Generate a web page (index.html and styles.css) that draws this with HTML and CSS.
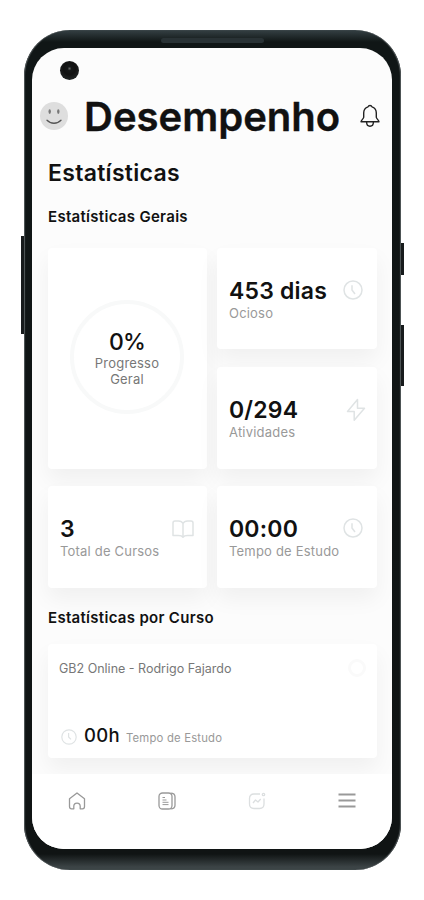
FILE: index.html
```html
<!DOCTYPE html>
<html lang="pt-BR">
<head>
    <meta charset="UTF-8">
    <meta name="viewport" content="width=device-width, initial-scale=1.0">
    <title>Desempenho</title>
    <link rel="stylesheet" href="styles.css">
</head>
<body>
    <div class="phone">
        <span class="speaker"></span>
        <span class="side-button volume"></span>
        <span class="side-button power"></span>
        <span class="side-button slider"></span>

        <div class="screen">
            <span class="camera"></span>

            <header class="topbar">
                <svg class="avatar" viewBox="0 0 28 28">
                    <circle cx="14" cy="14" r="14" fill="#dedede"/>
                    <ellipse cx="9.7" cy="9.6" rx="1.2" ry="2.3" fill="#777"/>
                    <ellipse cx="18.3" cy="9.6" rx="1.2" ry="2.3" fill="#777"/>
                    <path d="M7 18.300c3.600 3.900 10.400 3.900 14 0" fill="none" stroke="#555" stroke-width="1.3" stroke-linecap="round"/>
                </svg>
                <h1>Desempenho</h1>
                <svg class="bell" viewBox="0 0 20 24" fill="none" stroke="#222" stroke-width="1.4" stroke-linejoin="round" stroke-linecap="round">
                    <path d="M8 2.900a2.100 2.100 0 0 1 4 0c2.700.9 4.300 3.300 4.300 6.100v4.200c0 1.400 2.700 3 2.700 4.600H1c0-1.600 2.700-3.200 2.700-4.600V9c0-2.800 1.600-5.200 4.300-6.100z"/>
                    <path d="M6.600 18c0 2.500 1.300 4.200 3.400 4.200s3.400-1.700 3.400-4.200"/>
                </svg>
            </header>

            <main>
                <h2>Estatísticas</h2>

                <!-- Estatísticas gerais -->
                <h3>Estatísticas Gerais</h3>
                <section class="stats">
                    <div class="card progress">
                        <div class="ring">
                            <strong>0%</strong>
                            <span>Progresso<br>Geral</span>
                        </div>
                    </div>
                    <div class="card">
                        <div class="info">
                            <strong>453 dias</strong>
                            <span>Ocioso</span>
                        </div>
                        <svg class="icon clock" viewBox="0 0 20 20">
                            <circle cx="10" cy="10" r="9"/>
                            <path d="M9 5.200v4.800l3 4"/>
                        </svg>
                    </div>
                    <div class="card">
                        <div class="info">
                            <strong>0/294</strong>
                            <span>Atividades</span>
                        </div>
                        <svg class="icon bolt" viewBox="0 0 20 24">
                            <path d="M11.500 1.500L1.500 13.500h6.700v8.800L18.500 10.300h-7z"/>
                        </svg>
                    </div>
                    <div class="card">
                        <div class="info">
                            <strong>3</strong>
                            <span>Total de Cursos</span>
                        </div>
                        <svg class="icon book" viewBox="0 0 22 18">
                            <path d="M11 3.500C10 1.500 8.500 1 6.500 1H3Q1 1 1 3v12.500h5.500c2 0 3.500.3 4.500 1.700 1-1.400 2.500-1.700 4.500-1.700H21V3q0-2-2-2h-3.500C13.500 1 12 1.500 11 3.500zM11 3.500V17"/>
                        </svg>
                    </div>
                    <div class="card">
                        <div class="info">
                            <strong>00:00</strong>
                            <span>Tempo de Estudo</span>
                        </div>
                        <svg class="icon clock" viewBox="0 0 20 20">
                            <circle cx="10" cy="10" r="9"/>
                            <path d="M9 5.200v4.800l3 4"/>
                        </svg>
                    </div>
                </section>

                <!-- Estatísticas por curso -->
                <h3 class="by-course">Estatísticas por Curso</h3>
                <section class="course">
                    <div class="course-head">
                        <span class="course-name">GB2 Online - Rodrigo Fajardo</span>
                        <span class="course-ring"></span>
                    </div>
                    <div class="course-time">
                        <svg class="icon small-clock" viewBox="0 0 20 20">
                            <circle cx="10" cy="10" r="9"/>
                            <path d="M9.500 5v5l3 3"/>
                        </svg>
                        <strong>00h</strong>
                        <span>Tempo de Estudo</span>
                    </div>
                </section>
            </main>

            <nav>
                <svg viewBox="0 0 18 18">
                    <path d="M1.500 6.800L9 1l7.500 5.800v7.700c0 1.500-.8 2.300-2 2.300h-2.300v-2.600c0-4.200-6.400-4.200-6.400 0v2.600H3.500c-1.200 0-2-.8-2-2.300z"/>
                </svg>
                <svg viewBox="0 0 18 18">
                    <rect x="1" y="1" width="13" height="16" rx="3.500"/>
                    <path d="M12.500 1.200c3 0 4.500 1.200 4.500 3.600v8.400c0 2.400-1.500 3.600-4.500 3.600"/>
                    <path class="lines" d="M4.500 5.500h2.500M4.500 8h4M4.500 10.300h6M4.500 12.600h6"/>
                </svg>
                <svg class="active" viewBox="0 0 18 18">
                    <path d="M12 2H6C3 2 1.500 3.500 1.500 6.500v5.500c0 3 1.500 4.500 4.500 4.500h5.500c3 0 4.500-1.500 4.500-4.500V6.500M5 11l2.500-3 2.500 2 2.700-3"/>
                    <circle cx="15.500" cy="2.500" r="1.200"/>
                </svg>
                <svg class="menu" viewBox="0 0 18 18">
                    <path d="M.5 2.500h17M.5 8.500h17M.5 14.500h17"/>
                </svg>
            </nav>
        </div>
    </div>
</body>
</html>
```

FILE: styles.css
```css
* {
    box-sizing: border-box;
}

body {
    margin: 0;
    padding: 30px 0 0 24px;
    background-color: #fff;
    color: #111;
    font-family: Inter, "Liberation Sans", sans-serif;
}

h1, h2, h3 {
    margin: 0;
    font-weight: 600;
    white-space: nowrap;
}

/* Phone body */
.phone {
    position: relative;
    width: 377px;
    height: 840px;
    padding: 18px 9px 21px 8px;
    border-radius: 46px;
    background: linear-gradient(#354044 0, #101616 12px, #101414 824px, #3c4446 837px);
    box-shadow: inset 1px 0 1px #555b5d, inset -1px 0 1px #555b5d;
}

.speaker {
    position: absolute;
    top: 8px;
    left: 137px;
    width: 103px;
    height: 5px;
    border-radius: 3px;
    background-color: #293235;
}

.side-button {
    position: absolute;
    width: 3px;
    background-color: #171b1c;
}

.volume {
    left: -3px;
    top: 206px;
    height: 98px;
}

.power {
    right: -3px;
    top: 213px;
    height: 32px;
}

.slider {
    right: -3px;
    top: 295px;
    height: 61px;
}

.screen {
    position: relative;
    display: flex;
    flex-direction: column;
    width: 360px;
    height: 801px;
    border-radius: 32px;
    background-color: #fcfcfc;
    overflow: hidden;
}

.camera {
    position: absolute;
    left: 28px;
    top: 13px;
    width: 19px;
    height: 19px;
    border-radius: 50%;
    background: radial-gradient(circle at 50% 40%, #666 0, #151818 2px, #111 6px, #1d2020 10px);
}

/* Header */
.topbar {
    display: flex;
    align-items: center;
    height: 46px;
    margin-top: 45px;
    padding: 0 12px 0 8px;
}

.avatar {
    width: 28px;
    height: 28px;
}

.topbar h1 {
    flex: 1;
    padding: 1px 0 0 16px;
    font-size: 40px;
    letter-spacing: 0;
    line-height: 46px;
    -webkit-text-stroke: 0.4px #111;
}

.bell {
    width: 20px;
    height: 24px;
}

/* Content */
main {
    flex: 1;
    padding: 21px 15px 0 16px;
}

h2 {
    font-size: 23px;
    letter-spacing: 0.3px;
    line-height: 26px;
}

h3 {
    margin-top: 21px;
    font-size: 15px;
    letter-spacing: 0.3px;
    line-height: 20px;
}

.stats {
    display: grid;
    grid-template-columns: 159px 160px;
    grid-template-rows: 101px 102px 102px;
    gap: 17.5px 10px;
    margin-top: 21px;
}

.card, .course {
    border-radius: 4px;
    background-color: #fff;
    box-shadow: 0 11px 22px rgba(0, 0, 0, 0.05);
}

.card {
    display: flex;
    justify-content: space-between;
    padding: 29px 13px 0 12px;
}

.card strong {
    display: block;
    padding-top: 1px;
    font-size: 23px;
    font-weight: 600;
    letter-spacing: 0.2px;
    line-height: 26px;
    white-space: nowrap;
}

.card span {
    display: block;
    color: #999;
    font-size: 13px;
    letter-spacing: 0.2px;
    line-height: 18px;
    white-space: nowrap;
}

.card.progress {
    grid-row: span 2;
    justify-content: center;
    align-items: center;
    padding: 0 1px 2px 0;
}

.ring {
    display: flex;
    flex-direction: column;
    justify-content: center;
    width: 114px;
    height: 114px;
    border: 4px solid #f8f9f9;
    border-radius: 50%;
    text-align: center;
}

.ring strong {
    font-weight: 500;
    letter-spacing: -0.8px;
}

.card .ring span {
    color: #777;
    line-height: 16px;
}

.info {
    width: 0;
}

.icon {
    flex: none;
    fill: none;
    stroke: #dfe3e4;
    stroke-width: 1.5;
    stroke-linejoin: round;
}

.clock {
    width: 20px;
    height: 20px;
    margin: 3px 1px 0 0;
}

.bolt {
    width: 20px;
    height: 24px;
    margin: 2px -2px 0 0;
}

.book {
    width: 22px;
    height: 18px;
    margin-top: 5px;
}

/* Course card */
.by-course {
    margin-top: 20px;
}

.course {
    height: 114px;
    margin-top: 16px;
    padding: 14px 11px 0;
}

.course-head {
    display: flex;
    justify-content: space-between;
    align-items: center;
    height: 20px;
}

.course-name {
    color: #777;
    font-size: 12.5px;
}

.course-ring {
    width: 18px;
    height: 18px;
    border: 3px solid #fafafa;
    border-radius: 50%;
}

.course-time {
    display: flex;
    align-items: baseline;
    margin-top: 45px;
    line-height: 24px;
}

.small-clock {
    align-self: center;
    width: 16px;
    height: 16px;
    margin: 0 7px 0 2px;
}

.course-time strong {
    font-size: 18.5px;
    font-weight: 500;
    letter-spacing: 0.3px;
}

.course-time span {
    margin-left: 6px;
    color: #999;
    font-size: 11.3px;
    letter-spacing: 0.2px;
}

/* Bottom navigation */
nav {
    display: flex;
    justify-content: space-between;
    height: 75px;
    padding: 18px 36px 0;
    background-color: #fff;
}

nav svg {
    width: 18px;
    height: 18px;
    fill: none;
    stroke: #999;
    stroke-width: 1.3;
    stroke-linejoin: round;
}

nav .lines {
    stroke-width: 1;
}

nav .active {
    stroke: #dcdfe0;
}

nav .menu {
    stroke-width: 2;
}
```
